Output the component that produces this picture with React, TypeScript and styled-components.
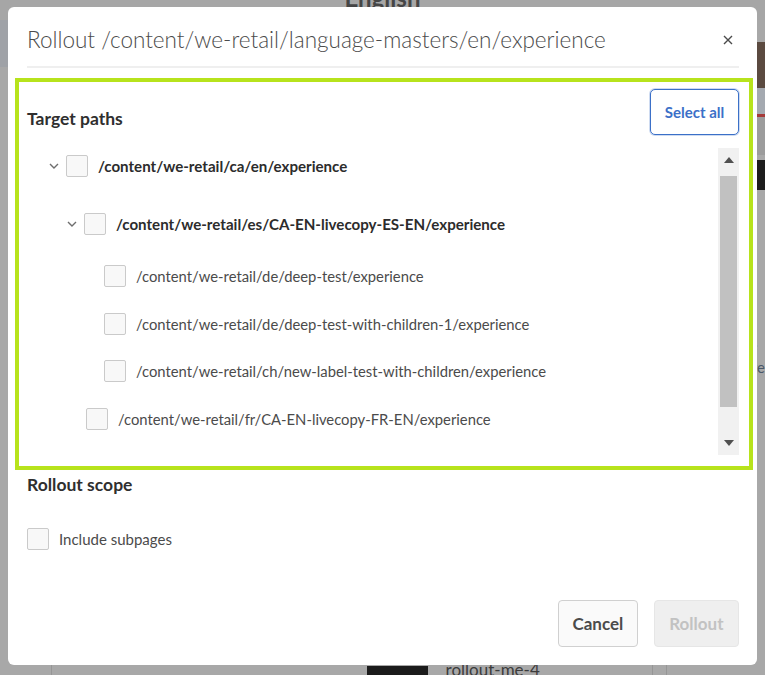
import React from 'react';
import styled, { createGlobalStyle } from 'styled-components';

const GlobalStyle = createGlobalStyle`
  html, body {
    margin: 0;
    padding: 0;
  }
  body {
    font-family: Lato, "Liberation Sans", sans-serif;
    background: #a8a8a8;
    overflow: hidden;
  }
  * {
    box-sizing: border-box;
  }
`;

/* ---------- dimmed page behind the dialog ---------- */

const Page = styled.div`
  height: 100vh;
  display: flex;
  flex-direction: column;
  background: #a8a8a8;
  overflow: hidden;
`;

const PageHeader = styled.div`
  height: 20px;
  display: flex;
  justify-content: center;
  overflow: hidden;
  background: #a6a6a6;
`;

const PageTitle = styled.div`
  margin-top: -14px;
  font-size: 24px;
  line-height: 24px;
  font-weight: 700;
  color: #454545;
`;

const PageBody = styled.div`
  flex: 1;
  display: flex;
`;

const Rail = styled.div`
  width: 52px;
  display: flex;
  flex-direction: column;
`;

const RailTool = styled.div`
  height: 47px;
  background: #9fa2a7;
`;

const ListPanel = styled.div`
  width: 619px;
  border-left: 1px solid #969696;
  border-right: 1px solid #969696;
  display: flex;
  flex-direction: column;
  justify-content: flex-end;
`;

const ListItem = styled.div`
  height: 44px;
  margin-bottom: -35px;
  display: flex;
  align-items: flex-start;
  gap: 18px;
  padding-left: 315px;
`;

const ListThumb = styled.div`
  width: 61px;
  height: 40px;
  background: #1b1b1b;
`;

const ListLabel = styled.div`
  font-size: 17px;
  line-height: 20px;
  margin-top: -6px;
  color: #3c3c3c;
`;

const SidePanel = styled.div`
  width: 14px;
  border-right: 1px solid #969696;
`;

const Cards = styled.div`
  flex: 1;
  display: flex;
  flex-direction: column;
  padding-top: 22px;
  padding-left: 6px;
`;

const Thumb = styled.div<{ $h: number; $c: string }>`
  height: ${p => p.$h}px;
  background: ${p => p.$c};
`;

const CardText = styled.div`
  margin-top: 144px;
  font-size: 15px;
  line-height: 22px;
  color: #4a5869;
  padding-left: 62px;
`;

/* ---------- dialog ---------- */

const Dialog = styled.div`
  position: fixed;
  left: 8px;
  top: 7px;
  width: 749px;
  height: 658px;
  background: #fff;
  border-radius: 6px;
  display: flex;
  flex-direction: column;
  padding: 19px 18px 18px 19px;
`;

const DialogHeader = styled.div`
  display: flex;
  align-items: center;
  justify-content: space-between;
  height: 28px;
`;

const DialogTitle = styled.h1`
  margin: 0;
  font-size: 22.5px;
  line-height: 28px;
  font-weight: 300;
  color: #4b4b4b;
`;

const CloseButton = styled.button`
  border: 0;
  background: none;
  padding: 0;
  margin-right: 5px;
  width: 12px;
  height: 12px;
  display: flex;
  align-items: center;
  justify-content: center;
  cursor: pointer;
`;

const Divider = styled.div`
  height: 2px;
  background: #efefef;
  margin-top: 12px;
`;

const Highlight = styled.section`
  margin: 10px -14px 0 -12px;
  border: 4px solid #b7e31c;
  padding: 7px 10px 11px 8px;
  display: flex;
  flex-direction: column;
`;

const SectionHead = styled.div`
  display: flex;
  justify-content: space-between;
  align-items: flex-end;
`;

const SectionTitle = styled.h2<{ $top?: number }>`
  margin: ${p => p.$top ?? 0}px 0 0 0;
  font-size: 17.5px;
  line-height: 20px;
  font-weight: 700;
  color: #2f2f2f;
`;

const HeadTitle = styled(SectionTitle)`
  margin-bottom: 6px;
`;

const SelectAll = styled.button`
  width: 89px;
  height: 46px;
  border: 1.5px solid #3b70c8;
  border-radius: 5px;
  background: #fff;
  box-shadow: 0 0 0 1px rgba(59, 112, 200, 0.25);
  font-family: inherit;
  font-size: 15px;
  font-weight: 700;
  color: #3b70c8;
  cursor: pointer;
`;

const TreeBox = styled.div`
  margin-top: 13px;
  height: 307px;
  display: flex;
`;

const Tree = styled.div`
  flex: 1;
  display: flex;
  flex-direction: column;
`;

const Row = styled.div<{ $indent: number; $gap: number }>`
  height: 22px;
  margin-top: ${p => p.$gap}px;
  padding-left: ${p => p.$indent}px;
  display: flex;
  align-items: center;
`;

const Toggle = styled.span`
  width: 18px;
  height: 22px;
  margin-right: 3px;
  display: flex;
  align-items: center;
  justify-content: center;
`;

const Box = styled.span`
  width: 22px;
  height: 22px;
  flex: none;
  border: 1px solid #cacaca;
  border-radius: 2px;
  background: #f8f8f8;
`;

const PathLabel = styled.span<{ $bold: boolean }>`
  margin-left: 10px;
  font-size: ${p => (p.$bold ? 15.1 : 14.8)}px;
  line-height: 20px;
  font-weight: ${p => (p.$bold ? 700 : 400)};
  color: ${p => (p.$bold ? '#2c2c2c' : '#4b4b4b')};
  white-space: nowrap;
`;

const Scrollbar = styled.div`
  width: 21px;
  background: #f1f1f1;
  display: flex;
  flex-direction: column;
  align-items: center;
`;

const ScrollArrow = styled.div`
  height: 24px;
  width: 100%;
  display: flex;
  align-items: center;
  justify-content: center;
`;

const ScrollThumb = styled.div`
  width: 17px;
  height: 231px;
  margin-top: 4px;
  background: #c1c1c1;
`;

const ScrollRest = styled.div`
  flex: 1;
`;

const OptionRow = styled.label`
  margin-top: 32px;
  display: flex;
  align-items: center;
  gap: 10px;
  height: 23px;
`;

const OptionText = styled.span`
  font-size: 15px;
  color: #4b4b4b;
`;

const Footer = styled.div`
  margin-top: auto;
  display: flex;
  justify-content: flex-end;
  gap: 16px;
`;

const Button = styled.button<{ $disabled?: boolean }>`
  height: 47px;
  padding: 0 ${p => (p.$disabled ? 14.5 : 13.5)}px;
  border-radius: 4px;
  border: 1px solid ${p => (p.$disabled ? '#e6e6e6' : '#d0d0d0')};
  background: ${p => (p.$disabled ? '#efefef' : '#fafafa')};
  color: ${p => (p.$disabled ? '#c2c2c2' : '#4b4b4b')};
  font-family: inherit;
  font-size: 17px;
  font-weight: 700;
  cursor: ${p => (p.$disabled ? 'default' : 'pointer')};
`;

const paths = [
  { label: '/content/we-retail/ca/en/experience', bold: true, open: true, indent: 18, gap: 7 },
  { label: '/content/we-retail/es/CA-EN-livecopy-ES-EN/experience', bold: true, open: true, indent: 36, gap: 36 },
  { label: '/content/we-retail/de/deep-test/experience', bold: false, open: false, indent: 56, gap: 30 },
  { label: '/content/we-retail/de/deep-test-with-children-1/experience', bold: false, open: false, indent: 56, gap: 26 },
  { label: '/content/we-retail/ch/new-label-test-with-children/experience', bold: false, open: false, indent: 56, gap: 25 },
  { label: '/content/we-retail/fr/CA-EN-livecopy-FR-EN/experience', bold: false, open: false, indent: 38, gap: 26 },
];

const Chevron = () => (
  <svg width="10" height="6" viewBox="0 0 10 6">
    <path d="M1 1 L5 5 L9 1" fill="none" stroke="#6e6e6e" strokeWidth="1.4" />
  </svg>
);

const App = () => {
  return (
    <>
      <GlobalStyle />
      <Page>
        <PageHeader>
          <PageTitle>English</PageTitle>
        </PageHeader>
        <PageBody>
          <Rail>
            <RailTool />
          </Rail>
          <ListPanel>
            <ListItem>
              <ListThumb />
              <ListLabel>rollout-me-4</ListLabel>
            </ListItem>
          </ListPanel>
          <SidePanel />
          <Cards>
            <Thumb $h={46} $c="#5b4a40" />
            <Thumb $h={26} $c="#a4a9b0" />
            <Thumb $h={3} $c="#a53a3a" />
            <Thumb $h={38} $c="#9c9c9c" />
            <Thumb $h={5} $c="#a8a8a8" />
            <Thumb $h={30} $c="#1d1d1d" />
            <CardText>
              We
              <br />
              Dive
            </CardText>
          </Cards>
        </PageBody>
      </Page>

      <Dialog>
        <DialogHeader>
          <DialogTitle>Rollout /content/we-retail/language-masters/en/experience</DialogTitle>
          <CloseButton aria-label="Close">
            <svg width="10" height="10" viewBox="0 0 10 10">
              <path d="M1 1 L9 9 M9 1 L1 9" stroke="#4b4b4b" strokeWidth="1.4" />
            </svg>
          </CloseButton>
        </DialogHeader>
        <Divider />

        <Highlight>
          <SectionHead>
            <HeadTitle>Target paths</HeadTitle>
            <SelectAll>Select all</SelectAll>
          </SectionHead>
          <TreeBox>
            <Tree>
              {paths.map(p => (
                <Row key={p.label} $indent={p.indent} $gap={p.gap}>
                  <Toggle>{p.open && <Chevron />}</Toggle>
                  <Box />
                  <PathLabel $bold={p.bold}>{p.label}</PathLabel>
                </Row>
              ))}
            </Tree>
            <Scrollbar>
              <ScrollArrow>
                <svg width="10" height="6" viewBox="0 0 10 6">
                  <polygon points="0,6 5,0 10,6" fill="#505050" />
                </svg>
              </ScrollArrow>
              <ScrollThumb />
              <ScrollRest />
              <ScrollArrow>
                <svg width="10" height="6" viewBox="0 0 10 6">
                  <polygon points="0,0 10,0 5,6" fill="#505050" />
                </svg>
              </ScrollArrow>
            </Scrollbar>
          </TreeBox>
        </Highlight>

        <SectionTitle $top={5}>Rollout scope</SectionTitle>
        <OptionRow>
          <Box />
          <OptionText>Include subpages</OptionText>
        </OptionRow>

        <Footer>
          <Button>Cancel</Button>
          <Button $disabled>Rollout</Button>
        </Footer>
      </Dialog>
    </>
  );
};

export default App;
